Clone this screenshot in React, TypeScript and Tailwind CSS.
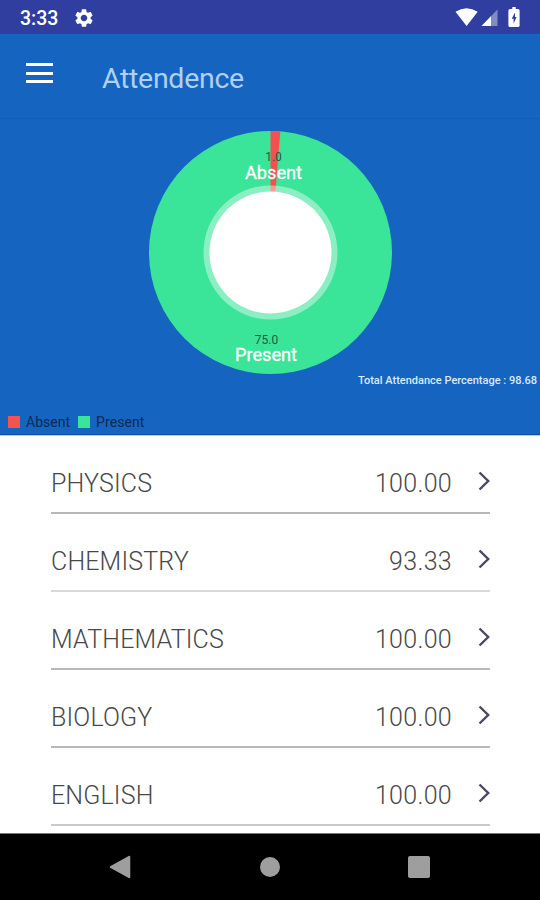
import React from "react";
import { MdSettings } from "react-icons/md";

type TSubject = {
  name: string;
  percentage: string;
  divider: string;
};

const subjects: TSubject[] = [
  { name: "PHYSICS", percentage: "100.00", divider: "border-[#b9b9b9]" },
  { name: "CHEMISTRY", percentage: "93.33", divider: "border-[#d9d9d9]" },
  { name: "MATHEMATICS", percentage: "100.00", divider: "border-[#b9b9b9]" },
  { name: "BIOLOGY", percentage: "100.00", divider: "border-[#b9b9b9]" },
  { name: "ENGLISH", percentage: "100.00", divider: "border-[#c9c9c9]" },
];

function StatusBar() {
  return (
    <div className="flex h-[34px] shrink-0 items-center bg-[#303f9f] pl-5 pr-[19px] text-white">
      <span className="w-[39px] pt-[3px] text-[19.5px] font-medium leading-none">
        3:33
      </span>
      <MdSettings className="ml-[14px] mt-[1px] size-[22px]" />
      <svg className="ml-auto" width="66" height="34" viewBox="0 0 66 34">
        <path d="M0.5 11.8Q11.5 4.5 22.7 11.8L11.6 26Z" fill="#fff" />
        <path d="M42.5 9.5V26H26.5Z" fill="#fff" fillOpacity="0.4" />
        <path d="M36 16.2V26H26.5Z" fill="#fff" />
        <path
          d="M57.3 7h3.4v2h2.3q1.6 0 1.6 1.6v14.8q0 1.6-1.6 1.6h-8q-1.6 0-1.6-1.6V10.6q0-1.6 1.6-1.6h2.3z"
          fill="#fff"
        />
        <path d="M60 12.5L56.7 18.7H58.6V23.5L61.6 17H60Z" fill="#303f9f" />
      </svg>
    </div>
  );
}

function Toolbar() {
  return (
    <div className="flex h-[85px] shrink-0 border-b border-[#145db2] pl-[26px]">
      <button className="mt-[29px] flex h-[20px] w-[27px] flex-col justify-between">
        <span className="h-[3px] w-full bg-white" />
        <span className="h-[3px] w-full bg-white" />
        <span className="h-[3px] w-full bg-white" />
      </button>
      <h1 className="ml-[49px] mt-[28px] text-[28.5px] leading-[33px] tracking-[-0.3px] text-[#aed0f5]">
        Attendence
      </h1>
    </div>
  );
}

function AttendanceChart() {
  return (
    <div className="flex h-[316px] shrink-0 flex-col border-b border-[#0f509f]">
      <svg
        className="mx-auto mt-[11px] shrink-0"
        width="244"
        height="244"
        viewBox="0 0 244 244"
        fontFamily="Roboto, sans-serif"
        textAnchor="middle"
      >
        <circle cx="122.5" cy="122.5" r="121.5" fill="#3ae499" />
        <path d="M122.5 122.5V1A121.5 121.5 0 0 1 132.3 1.4Z" fill="#f4504f" />
        <circle cx="122.5" cy="122.5" r="67" fill="#fff" fillOpacity="0.42" />
        <circle cx="122.5" cy="122.5" r="61" fill="#fff" />
        <text x="125.5" y="31" fontSize="12" fill="#1f5a3f">
          1.0
        </text>
        <text x="125.5" y="48.5" fontSize="18.2" fill="#fff" stroke="#fff" strokeWidth="0.3">
          Absent
        </text>
        <text x="118.5" y="213.5" fontSize="12" fill="#1f5a3f">
          75.0
        </text>
        <text x="118" y="230.5" fontSize="18.2" fill="#fff" stroke="#fff" strokeWidth="0.3">
          Present
        </text>
      </svg>
      <p className="mr-[3px] mt-[1px] self-end text-[11px] font-medium leading-[12px] text-[#dceaff]">
        Total Attendance Percentage : 98.68
      </p>
      <div className="ml-[8px] mt-[27px] flex items-center text-[14px] leading-[16px] text-[#0b2b53]">
        <span className="size-[12px] bg-[#f4534f]" />
        <span className="ml-[6px] w-[44px]">Absent</span>
        <span className="ml-[8px] size-[12px] bg-[#3ae499]" />
        <span className="ml-[6px] tracking-[0.1px]">Present</span>
      </div>
    </div>
  );
}

function SubjectRow({ name, percentage, divider }: TSubject) {
  return (
    <li
      className={`flex h-[78px] shrink-0 items-center border-b-2 pt-[17px] text-[25px] font-light leading-[30px] text-[#484848] ${divider}`}
    >
      <span className="mt-[2px] tracking-[0.15px]">{name}</span>
      <span className="ml-auto mt-[2px] tracking-[0.3px]">{percentage}</span>
      <svg
        className="-mt-[3px] ml-[26px]"
        width="12"
        height="20"
        viewBox="0 0 12 20"
        fill="none"
        stroke="#4a4860"
        strokeWidth="2.4"
      >
        <path d="M1.5 1.5L10.2 10L1.5 18.5" />
      </svg>
    </li>
  );
}

function NavigationBar() {
  return (
    <div className="flex h-[67px] shrink-0 items-center border-t border-[#777] bg-black pl-[109px]">
      <svg width="22" height="24" viewBox="0 0 22 24">
        <path
          d="M20.5 1.5V22.5L1.5 12Z"
          fill="#9e9e9e"
          stroke="#9e9e9e"
          strokeWidth="1.5"
          strokeLinejoin="round"
        />
      </svg>
      <span className="ml-[129px] size-[20px] rounded-full bg-[#9e9e9e]" />
      <span className="ml-[128px] size-[22px] rounded-[2px] bg-[#9e9e9e]" />
    </div>
  );
}

export default function App() {
  return (
    <div className="flex h-[900px] w-[540px] flex-col overflow-hidden bg-[#1565c0] font-['Roboto',sans-serif]">
      <StatusBar />
      <Toolbar />
      <AttendanceChart />
      <ul className="flex flex-1 flex-col overflow-hidden border-t border-[#b8d0ee] bg-white pl-[51px] pr-[50px]">
        {subjects.map((subject) => (
          <SubjectRow key={subject.name} {...subject} />
        ))}
      </ul>
      <NavigationBar />
    </div>
  );
}
